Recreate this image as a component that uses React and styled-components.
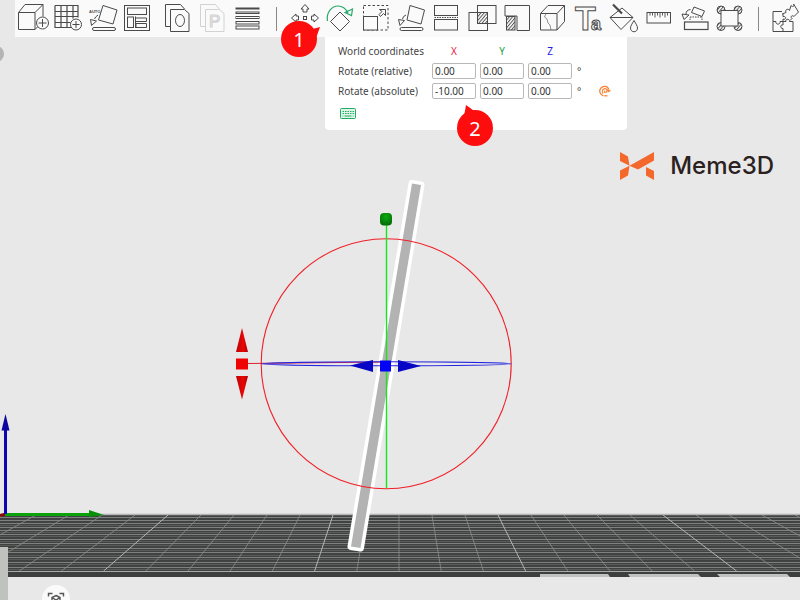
import React from "react";
import styled, { createGlobalStyle } from "styled-components";

const GlobalStyle = createGlobalStyle`
  * {
    box-sizing: border-box;
  }
  body {
    margin: 0;
    background: #e8e8e8;
    font-family: "Noto Sans", sans-serif;
    color: #444;
  }
`;

const Page = styled.div`
  display: flex;
  flex-direction: column;
  min-height: 100vh;
  overflow: hidden;
`;
const Patterns = styled.svg`
  display: block;
  width: 0;
  height: 0;
`;
const Toolbar = styled.header`
  display: flex;
  height: 37px;
  margin-left: 15px;
  padding-left: 1px;
  background: #fafafa;
`;
const ToolGroup = styled.div`
  display: flex;
  flex: ${(p) => (p.$grow ? "1" : "none")};
  margin-left: ${(p) => (p.$spaced ? "4px" : "0")};
`;
const ToolButton = styled.button`
  display: flex;
  justify-content: center;
  flex: ${(p) => (p.$narrow ? "none" : "1")};
  width: ${(p) => (p.$narrow ? "30px" : "auto")};
  padding: 0;
  border: 0;
  background: none;
  opacity: ${(p) => (p.disabled ? "0.22" : "1")};
`;
const ToolIcon = styled.svg`
  flex: none;
  width: 35px;
  height: 36px;
  fill: none;
  stroke: #4a4a4a;
  stroke-width: 1;
  overflow: visible;
`;
const Separator = styled.div`
  flex: none;
  width: 23px;
  padding: 7px 11px;

  &::before {
    content: "";
    display: block;
    width: 1px;
    height: 24px;
    background: #888;
  }
`;
const Viewport = styled.main`
  position: relative;
  flex: 1;
`;
const SceneSvg = styled.svg`
  position: absolute;
  inset: 0;
  width: 100%;
  height: 100%;
`;
const Panel = styled.section`
  position: absolute;
  top: 0;
  left: 325px;
  width: 302px;
  padding: 4px 13px 9px;
  border-radius: 0 0 4px 4px;
  background: #fff;
  font-size: 10px;
`;
const Row = styled.div`
  display: grid;
  grid-template-columns: 90px 44px 44px 44px 19px 14px;
  column-gap: 4px;
  align-items: center;
  height: 20px;
`;
const RowLabel = styled.span`
  white-space: nowrap;
`;
const Axis = styled.span`
  text-align: center;
  color: ${(p) => p.$color};
`;
const ValueInput = styled.input`
  width: 100%;
  height: 16px;
  padding: 0 2px;
  border: 1px solid #b8b8b8;
  border-radius: 2px;
  background: #fff;
  color: #333;
  font: inherit;
`;
const Degree = styled.span`
  padding-left: 1px;
`;
const IconButton = styled.button`
  display: flex;
  padding: 0;
  border: 0;
  background: none;
`;
const Shortcuts = styled.div`
  display: flex;
  align-items: center;
  height: 20px;
  padding: 4px 2px 0;
`;
const Callout = styled.div`
  position: absolute;
  top: ${(p) => p.$top}px;
  left: ${(p) => p.$left}px;
  display: flex;
  align-items: center;
  justify-content: center;
  width: 36px;
  height: 36px;
  border-radius: 50%;
  background: #fd0d0d;
  color: #fff;
  font-size: 20px;
`;
const CalloutTail = styled.svg`
  position: absolute;
  inset: 0;
  overflow: visible;
  fill: #fd0d0d;
`;
const CalloutText = styled.span`
  position: relative;
`;
const Brand = styled.div`
  position: absolute;
  top: 113px;
  right: 26px;
  display: flex;
  align-items: center;
  gap: 15px;
  color: #2a2120;
  font: 500 24px/32px Inter, sans-serif;
`;
const SideKnob = styled.div`
  position: absolute;
  top: 9px;
  left: -12px;
  width: 16px;
  height: 16px;
  border-radius: 50%;
  background: #b4b4b4;
`;
const SidePanel = styled.div`
  position: absolute;
  bottom: 0;
  left: 0;
  width: 8px;
  height: 53px;
  background: #c0c2c0;
`;
const FitButton = styled.button`
  position: absolute;
  bottom: -13px;
  left: 42px;
  display: flex;
  justify-content: center;
  width: 28px;
  height: 28px;
  padding: 7px 0 0;
  border: 0;
  border-radius: 50%;
  background: #fafafa;
`;

const objectTools = [
  {
    name: "Add",
    icon: (
      <>
        <path d="M2.5 12.5H19V29.5H2.5ZM2.5 12.5L9 4.5H27L19 12.5M27 4.5V16.5M19 29.5L21.5 27" />
        <circle cx="26.5" cy="23" r="6" />
        <path d="M22.5 23H30.5M26.5 19V27" />
      </>
    ),
  },
  {
    name: "Add plate",
    icon: (
      <>
        <path d="M4 5.5H27V17.5M4 5.5V27.5H20M10 5.5V27.5M16 5.5V27.5M22 5.5V18.5M4 11.5H27M4 16.5H27M4 22.5H19.5" strokeWidth="1.2" />
        <circle cx="25" cy="24.5" r="5.5" />
        <path d="M21.5 24.5H28.5M25 21V28" />
      </>
    ),
  },
  {
    name: "Auto orient",
    icon: (
      <>
        <text x="3" y="13" fontSize="4" fontWeight="700" fill="#4a4a4a" stroke="none">AUTO</text>
        <path d="M17 5.5L31 10L27 24L12.5 20Z" />
        <rect x="6.5" y="27.5" width="23" height="3" rx="1.5" />
        <path d="M12 15Q9 17 8.5 19M4.5 19.5L10.5 21L5.5 25.5Z" />
      </>
    ),
  },
  {
    name: "Arrange",
    icon: (
      <>
        <rect x="3.5" y="5.5" width="25" height="25" />
        <rect x="6.5" y="8" width="19" height="6.5" />
        <rect x="6.5" y="17" width="6" height="10.5" />
        <path d="M14.5 16.5V28M14.5 18H25.5V21.5H15M15 23.5H25.5V27.5H15Z" />
      </>
    ),
  },
];

const plateTools = [
  {
    name: "Copy",
    icon: (
      <>
        <path d="M10.5 26.5H5.5V4.5H20.5L24.5 9" />
        <path d="M10.5 9.5H24.5L29 13.5V31.5H10.5Z" />
        <ellipse cx="20" cy="20.5" rx="4.5" ry="6" />
      </>
    ),
  },
  {
    name: "Paste",
    disabled: true,
    icon: (
      <>
        <path d="M10.5 26.5H5.5V4.5H20.5L24.5 9" />
        <path d="M10.5 9.5H24.5L29 13.5V31.5H10.5Z" />
        <text x="14" y="27" fontSize="17" fontFamily="Liberation Sans" strokeWidth="1.2">P</text>
      </>
    ),
  },
  {
    name: "Layers",
    icon: (
      <>
        <rect x="6" y="8" width="23" height="1" />
        <rect x="6" y="12" width="23" height="1.5" />
        <rect x="6" y="16.5" width="23" height="2" />
        <rect x="6" y="21.5" width="23" height="2.5" />
        <rect x="6" y="26" width="23" height="3" />
      </>
    ),
  },
];

const editTools = [
  {
    name: "Move",
    icon: (
      <>
        <rect x="15.5" y="16.5" width="3" height="3" />
        <path d="M17 4.5L21 9H19V12H15V9H13ZM17 31.5L21 27H19V24H15V27H13Z" />
        <path d="M3.5 18L8 14V16H10.5V20H8V22ZM30.5 18L26 14V16H23.5V20H26V22Z" />
      </>
    ),
  },
  {
    name: "Rotate",
    icon: (
      <>
        <path d="M17 12L26.5 21.5L17 31L7.5 21.5Z" />
        <path d="M4.5 21C3 12 9 6 15 6C20 6 23 9 25 13M22 12.5L29.5 9L28.5 15.5Z" stroke="#27a96a" strokeWidth="1.2" />
      </>
    ),
  },
  {
    name: "Scale",
    icon: (
      <>
        <rect x="4.5" y="5.5" width="24.5" height="24.5" strokeDasharray="2.5 2" />
        <rect x="4.5" y="16.5" width="14" height="13.5" fill="#fafafa" />
        <path d="M20 14.5L23 11.5L20.5 9.5H26.5V15.5L24.5 13.5L21.5 16.5Z" />
      </>
    ),
  },
  {
    name: "Place on face",
    icon: (
      <>
        <path d="M16 5.5L30.5 10L27 24L13 20Z" />
        <rect x="6" y="27.5" width="23" height="3" rx="1.5" />
        <path d="M12 15Q9 16 8.5 19M4.5 19.5L10.5 20.5L6 25.5Z" />
      </>
    ),
  },
  {
    name: "Cut",
    icon: (
      <>
        <rect x="5.5" y="5.5" width="23" height="10" />
        <rect x="5.5" y="19.5" width="23" height="10.5" />
        <path d="M5.5 17.5H29" strokeDasharray="1.5 1" />
      </>
    ),
  },
  {
    name: "Boolean",
    icon: (
      <>
        <rect x="12.5" y="5.5" width="18.5" height="18" />
        <rect x="4" y="12.5" width="18.5" height="18" />
        <rect x="12.5" y="12.5" width="10" height="11" fill="url(#hatch)" />
      </>
    ),
  },
  {
    name: "Mesh boolean",
    icon: (
      <>
        <path d="M5 5.5H29.5V30.5H17V16H5Z" />
        <rect x="6.5" y="16.5" width="8.5" height="13.5" fill="url(#hatch)" />
      </>
    ),
  },
  {
    name: "Seam",
    icon: (
      <>
        <path d="M5.5 13.5H22V30H5.5ZM5.5 13.5L13 5.5H29.5L22 13.5M29.5 5.5V21.5L22 30" />
        <path d="M11 13.5L9.5 17L12 19L13 23L15 25L16 30" strokeWidth="0.6" />
      </>
    ),
  },
  {
    name: "Text",
    icon: (
      <text x="4" y="30" fontSize="34" fontWeight="700" fontFamily="Liberation Sans">
        T<tspan x="20" fontSize="18" fill="#fafafa">a</tspan>
      </text>
    ),
  },
  {
    name: "Paint",
    icon: (
      <>
        <path d="M4 17.5L16 8L27 17.5L15 29.5ZM4 17.5H27" />
        <path d="M7 4.5L16 13.5" strokeWidth="2.2" />
        <path d="M28 20.5C26 24 24.5 26 24.5 28C24.5 33 31.5 33 31.5 28C31.5 26 30 24 28 20.5Z" fill="#fafafa" />
      </>
    ),
  },
  {
    name: "Measure",
    icon: (
      <>
        <rect x="6" y="12.5" width="23.5" height="10.5" />
        <path d="M9 12.5V15.5M11.5 12.5V15.5M14 12.5V17.5M16.5 12.5V15.5M19 12.5V17.5M21.5 12.5V15.5M24 12.5V17.5M26.5 12.5V15.5" strokeWidth="0.9" />
      </>
    ),
  },
  {
    name: "Assembly",
    icon: (
      <>
        <rect x="7.5" y="22" width="23.5" height="7.5" strokeWidth="1.2" />
        <path d="M17 7L27.5 11L25 16.5L14.5 12.5Z" />
        <path d="M13 20V17M25 20V17M13 17H25" strokeDasharray="1.5 1" />
        <path d="M13.5 9.5Q9 10 9 14M5 14L12 15L7 19.5Z" />
      </>
    ),
  },
  {
    name: "Fit frame",
    icon: (
      <>
        <circle cx="9" cy="10" r="4" fill="url(#hatch)" />
        <circle cx="26" cy="10" r="4" fill="url(#hatch)" />
        <circle cx="9" cy="26.5" r="4" fill="url(#hatch)" />
        <circle cx="26" cy="26.5" r="4" fill="url(#hatch)" />
        <rect x="9" y="10.5" width="17" height="15.5" fill="#fafafa" />
      </>
    ),
  },
];

const renderTool = ({ name, icon, disabled }) => (
  <ToolButton key={name} type="button" aria-label={name} disabled={disabled}>
    <ToolIcon viewBox="0 0 35 36">{icon}</ToolIcon>
  </ToolButton>
);

const axes = [
  { id: "x", label: "X", color: "#e8203c" },
  { id: "y", label: "Y", color: "#22a04a" },
  { id: "z", label: "Z", color: "#2a20e0" },
];

const RotateRow = ({ id, label, values, children }) => (
  <Row>
    <RowLabel id={id}>{label}</RowLabel>
    {axes.map((axis, i) => (
      <ValueInput key={axis.id} type="text" defaultValue={values[i]} aria-labelledby={`${id} axis-${axis.id}`} />
    ))}
    <Degree>°</Degree>
    {children}
  </Row>
);

const RotatePanel = () => (
  <Panel>
    <Row>
      <RowLabel>World coordinates</RowLabel>
      {axes.map((axis) => (
        <Axis key={axis.id} id={`axis-${axis.id}`} $color={axis.color}>{axis.label}</Axis>
      ))}
    </Row>
    <RotateRow id="relative" label="Rotate (relative)" values={["0.00", "0.00", "0.00"]} />
    <RotateRow id="absolute" label="Rotate (absolute)" values={["-10.00", "0.00", "0.00"]}>
      <IconButton type="button" aria-label="Reset rotation">
        <svg width="13" height="12" viewBox="0 0 13 12" fill="none" stroke="#f58232" strokeWidth="1.3">
          <path d="M4.5 10.8C0.8 9.8 -0.2 5.8 1.8 3.2C4 0.4 8.6 0.6 9.8 4.5" />
          <path d="M4.2 8.6C2.6 6.8 3.2 3.8 5.8 3.6C8 3.5 8.6 5.6 7.4 7.2H5.6V5.6" strokeWidth="1.1" />
          <path d="M5.4 10.8H8.4" />
          <path d="M7.8 4L12.2 5.8L8.8 7.6Z" fill="#f58232" stroke="none" />
        </svg>
      </IconButton>
    </RotateRow>
    <Shortcuts>
      <IconButton type="button" aria-label="Shortcuts">
        <svg width="16" height="11" viewBox="0 0 16 11" fill="none" stroke="#22ab62">
          <rect x="0.5" y="0.5" width="15" height="10" rx="1" fill="#dff5e8" />
          <path d="M2.5 3.5H14M2.5 5.5H14" strokeDasharray="1.5 1" />
          <path d="M4.5 8H11.5M2.5 8H3.3M12.7 8H13.5" />
        </svg>
      </IconButton>
    </Shortcuts>
    <Callout $top={-16} $left={-44}>
      <CalloutTail width="36" height="36"><path d="M22 2L28 9L39 6L34 20Z" /></CalloutTail>
      <CalloutText>1</CalloutText>
    </Callout>
    <Callout $top={73} $left={132}>
      <CalloutTail width="36" height="36"><path d="M6 12L9 -5L20 3Z" /></CalloutTail>
      <CalloutText>2</CalloutText>
    </Callout>
  </Panel>
);

// plate lines share one vanishing point, x = 399
const plateColumns = Array.from({ length: 27 }, (_, i) => i - 13);
const plateRows = [517, 520, 523, 527, 530, 534, 539, 543, 548, 552, 557, 562, 567];

const Scene = () => (
  <SceneSvg viewBox="0 37 800 563" preserveAspectRatio="xMidYMid slice" fill="none">
    <defs>
      <radialGradient id="ball" cx="0.5" cy="0.3" r="0.7">
        <stop offset="0" stopColor="#0cab10" />
        <stop offset="1" stopColor="#046b08" />
      </radialGradient>
      <linearGradient id="redUp">
        <stop offset="0" stopColor="#c00000" />
        <stop offset="0.6" stopColor="#e80808" />
        <stop offset="1" stopColor="#b00000" />
      </linearGradient>
    </defs>

    {/* build plate */}
    <path d="M0 515H800V572H0Z" fill="#3f4241" />
    {plateRows.map((y) => (
      <path key={y} d={`M0 ${y + 0.5}H800`} stroke="#7d817f" />
    ))}
    <path d="M0 525.5H800M0 532.5H800M0 536.5H800M0 541.5H800M0 545.5H800M0 550.5H800M0 555.5H800M0 559.5H800M0 564.5H800M0 569.5H800" stroke="#5c5f5e" strokeWidth="0.9" />
    {plateColumns.map((k) => (
      <path
        key={k}
        d={`M${399 + k * 33} 515L${399 + k * 42.2} 571`}
        stroke={(k + 12) % 5 === 0 ? "#b4b6b5" : "#8b8e8d"}
        strokeWidth={(k + 12) % 5 === 0 ? 1 : 0.8}
      />
    ))}
    <path d="M0 514.5H800" stroke="#b2b4b3" strokeWidth="1.5" />
    <path d="M0 571.5H800" stroke="#a9abaa" />
    <path d="M0 572H800V574H540V577H0Z" fill="#3c3f3e" />
    <path d="M540 574H800V577H540Z" fill="#c0c2c1" />
    <path d="M608 574H628L630 577H610ZM698 574H717L720 577H701ZM787 574H800V577H790Z" fill="#3c3f3e" />

    {/* origin axes */}
    <path d="M0 515.5L6 514" stroke="#8a0808" strokeWidth="3" />
    <path d="M5 514.5H91" stroke="#0aa30c" strokeWidth="3" />
    <path d="M89 510L104 515L89 517Z" fill="#079008" />
    <path d="M5.5 430V514" stroke="#0a06b4" strokeWidth="3" />
    <path d="M5.5 414L9.5 430.5H1.5Z" fill="#0a06a0" />

    {/* model */}
    <path d="M412 183.5L421 185L360.5 548L351 546.5Z" fill="#fff" stroke="#fff" strokeWidth="7" strokeLinejoin="round" />
    <path d="M412 183.5L421 185L360.5 548L351 546.5Z" fill="#b4b3b3" />

    {/* rotate gizmo */}
    <path d="M247 363.5L386 362" stroke="#e02030" />
    <circle cx="386.2" cy="363.7" r="125" stroke="#f02028" strokeWidth="1.1" />
    <path d="M386.5 224V488" stroke="#14e81a" strokeWidth="1.4" />
    <ellipse cx="386.2" cy="363.8" rx="125" ry="2" stroke="#2424e0" strokeWidth="1.1" />
    <path d="M242 328L248 352H236Z" fill="url(#redUp)" />
    <path d="M236 358.5H248V369.5H236Z" fill="#ee0404" />
    <path d="M236 376H248L242 399.5Z" fill="url(#redUp)" />
    <path d="M350 365.5L373 360V372ZM421 366L398 360V372Z" fill="#0606c4" />
    <path d="M380 360.5H391V371.5H380Z" fill="#0202f6" />
    <rect x="380" y="213" width="12" height="12.5" rx="4" fill="url(#ball)" />
  </SceneSvg>
);

const App = () => {
  return (
    <Page>
      <GlobalStyle />
      <Patterns>
        <pattern id="hatch" width="2.5" height="2.5" patternUnits="userSpaceOnUse" patternTransform="rotate(40)">
          <path d="M0.5 0V2.5" stroke="#4a4a4a" strokeWidth="0.9" />
        </pattern>
      </Patterns>
      <Toolbar>
        <ToolGroup>{objectTools.map(renderTool)}</ToolGroup>
        <ToolGroup $spaced>{plateTools.map(renderTool)}</ToolGroup>
        <Separator />
        <ToolGroup $grow>{editTools.map(renderTool)}</ToolGroup>
        <Separator />
        <ToolGroup>
          <ToolButton type="button" aria-label="Assembly view" $narrow>
            <ToolIcon viewBox="0 0 35 36">
              <path d="M5 11.5H14M5 11.5V31.5H25V21.5M5 21.5H8C7 25 13 25 12 21.5H15V19C18 20.5 19 16 15 16.5V14M15 22V25C12 24 12 29 15 28.5V31.5M15 21.5H18C17 18.5 22 18.5 21.5 21.5H25" />
              <path d="M14 14L18 12.5C16.5 9.5 20.5 8 21.5 10.5L23 5.5C25 7.5 27 6 25.5 4L30.5 12L26 16.5C24 14.5 22 17 24 18.5L22 20.5" />
            </ToolIcon>
          </ToolButton>
        </ToolGroup>
      </Toolbar>
      <Viewport>
        <Scene />
        <SideKnob />
        <SidePanel />
        <Brand>
          <svg width="36" height="30" viewBox="0 0 36 30" fill="#f4682c">
            <path d="M1 1L9 5.5L10.5 14.8L1 10Z" />
            <path d="M1 19.5L10.5 14.8L9 24.5L1 29Z" />
            <path d="M10.5 14.8L27 5.5L35 1V9.5L19 18.5Z" />
            <path d="M27 16L35 20V29L27 24.5Z" />
          </svg>
          <span>Meme3D</span>
        </Brand>
        <RotatePanel />
        <FitButton type="button" aria-label="Fit view">
          <svg width="18" height="16" viewBox="0 0 18 16" fill="none" stroke="#555" strokeWidth="1.4">
            <path d="M1.5 4.5V1.5H5.5M12.5 1.5H16.5V4.5M1.5 11V14.5H5.5M12.5 14.5H16.5V11" />
            <path d="M9 3.5L13 5.5V10L9 12L5 10V5.5ZM5 5.5L9 8L13 5.5" />
          </svg>
        </FitButton>
      </Viewport>
    </Page>
  );
};

export default App;
